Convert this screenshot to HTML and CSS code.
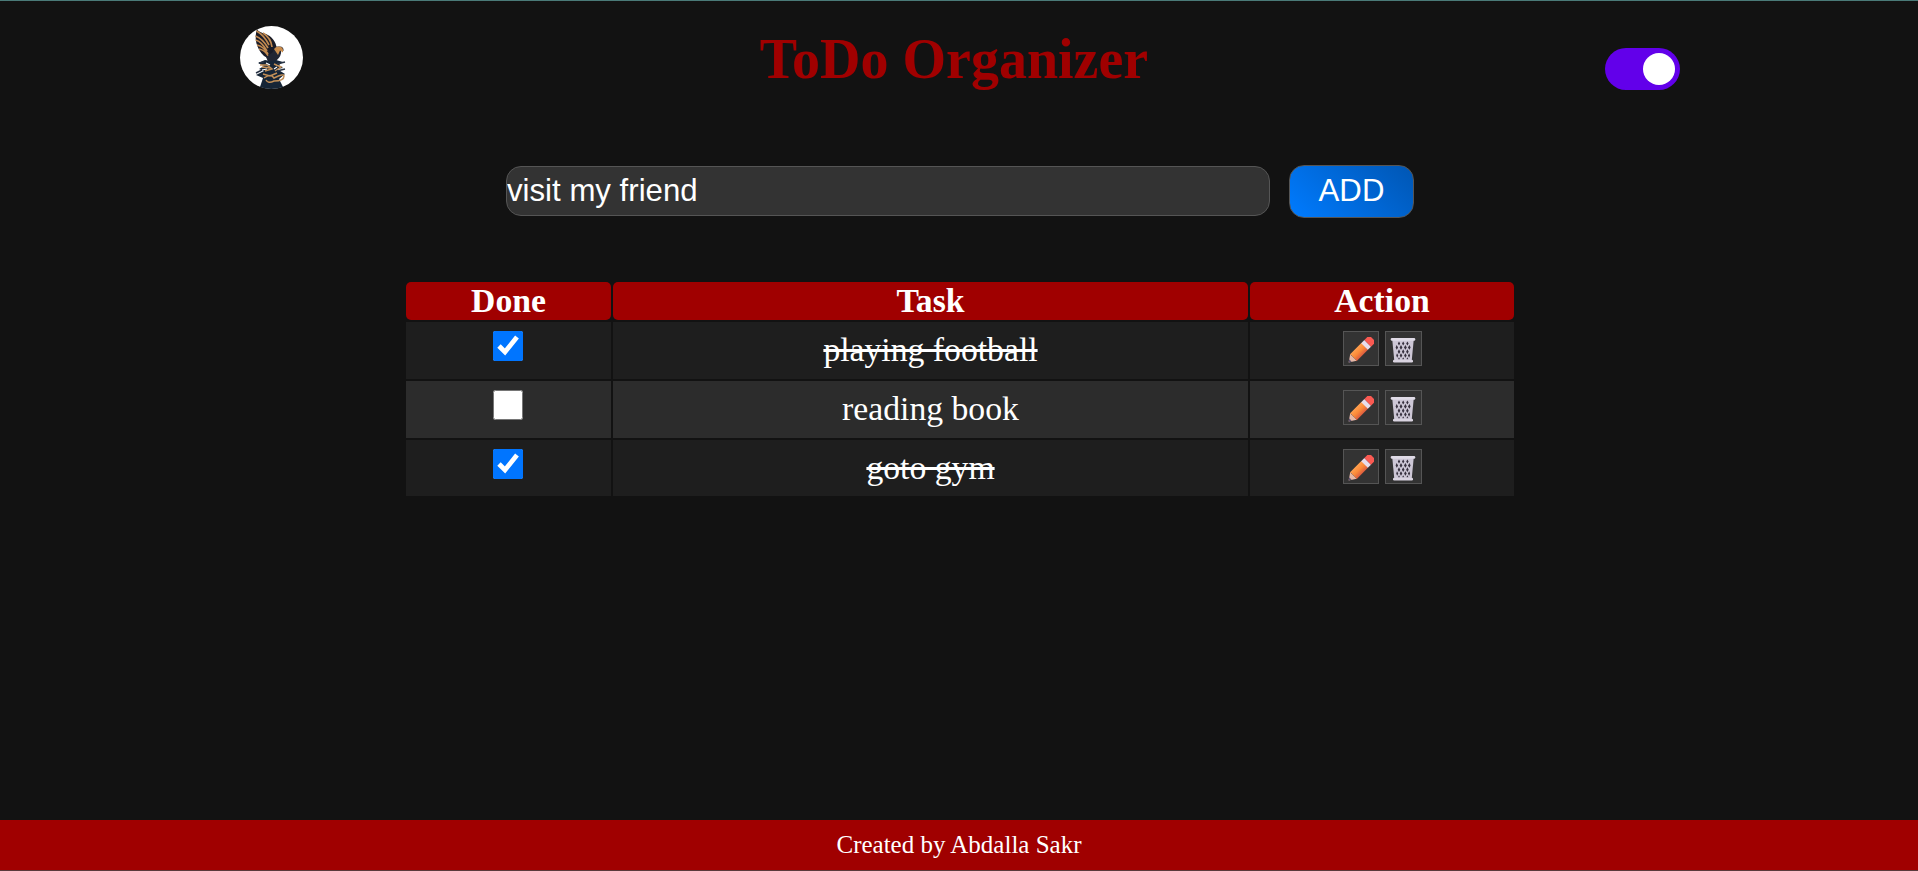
FILE: index.html
```
<!DOCTYPE html>
<html lang="en">
<head>
<meta charset="utf-8">
<title>ToDo Organizer</title>
<link rel="stylesheet" href="styles.css">
</head>
<body>
<svg width="0" height="0" class="defs">
  <defs>
    <linearGradient id="wood" x1="0" y1="0" x2="0" y2="1"><stop offset="0" stop-color="#ffa050"/><stop offset=".5" stop-color="#fb8a38"/><stop offset="1" stop-color="#dc5c40"/></linearGradient>
    <symbol id="pencil" viewBox="0 0 26 26">
      <g transform="translate(.6 25.400) rotate(-45)">
        <path d="M0 0 7-4.700V4.700Z" fill="#e6b8a6"/>
        <path d="M0 0 2.600-1.800V1.800Z" fill="#5d5270"/>
        <path d="M6.500-4.700H23V4.700H6.500Q8 2.500 6.800 1.500 8 0 6.800-1.500 8-2.500 6.500-4.700Z" fill="url(#wood)"/>
        <path d="M22.500-4.700h4.500v9.400h-4.500Z" fill="#e8deec"/>
        <path d="M27-4.700h4.200q2.600 0 2.600 2.600v4.200q0 2.600-2.600 2.600H27Z" fill="#fa5a52"/>
      </g>
    </symbol>
    <symbol id="bin" viewBox="0 0 26 26">
      <path d="M2.300 3h21.400l-2 21H4.300Z" fill="#cdc7d6"/>
      <g fill="#37313f">
        <path d="m9 4.500 1.200 2L9 8.500l-1.200-2ZM13.200 4.500l1.200 2-1.200 2-1.200-2ZM17.400 4.500l1.200 2-1.200 2-1.200-2ZM6.600 8l1.500 2.400-1.300 2.400-1.200-2.400ZM11 8l1.400 2.400L11 12.800l-1.400-2.400ZM15.400 8l1.400 2.400-1.400 2.400-1.400-2.400ZM19.600 8l1 2.400-1.200 2.400-1.500-2.400ZM9 12.300l1.300 2.400L9 17.100l-1.300-2.400ZM13.200 12.300l1.300 2.400-1.300 2.400-1.300-2.400ZM17.400 12.300l1.300 2.400-1.300 2.400-1.300-2.400ZM7 16.300l1.300 2.200L7.200 20.700l-1-2.200ZM11 16.300l1.300 2.200-1.300 2.200-1.300-2.200ZM15.400 16.300l1.300 2.200-1.300 2.200-1.300-2.200ZM19.200 16.300l.9 2.200-1 2.200-1.200-2.200ZM9 20.300l1 2H8ZM13.200 20.300l1 2h-2ZM17.400 20.300l1 2h-2Z"/>
      </g>
      <rect x=".7" y="1" width="24.600" height="2.800" rx="1.300" fill="#e0dbe7"/>
      <rect x="3" y="22.700" width="20" height="2.800" rx="1.300" fill="#dad4e1"/>
    </symbol>
  </defs>
</svg>
<header class="header">
  <svg class="logo" viewBox="0 0 63 63" role="img" aria-label="Eagle logo">
    <circle cx="31.500" cy="31.500" r="31.500" fill="#fff"/>
    <path d="M17 3C14 12 16 22 24 30L33 35 37 23C36 15 31 10 26 8Q18 6 17 3Z" fill="#1a1b26"/>
    <g fill="none" stroke="#c28a50" stroke-width="1.700">
      <path d="M16.500 5Q24 9 29 19M15.500 10Q23 13 28 22M15.700 14Q22 16 27 25M17 19Q23 20 28 28M19 23Q25 24 29 31M23 7Q31 12 32 21"/>
    </g>
    <path d="M33 26Q34 20 39 20.500 44 20 43.500 25L41 24Q42 30 36 35L29 38 26 31Z" fill="#222532"/>
    <path d="M34 23Q37 19.500 41 21 43.500 22 43 26.500L40 24.500 38 29Z" fill="#c98c4c"/>
    <path d="M18 37 25 34 30 35 36 34 43 36 39 39 43 42 37 43 45 48 39 53 43 61Q31 65 20 61L23 52 16 49 24 45 19 43 24 40Z" fill="#162536"/>
    <path d="m20 39 7 0 5 4-7 2m9-7 7 3-6 4m-12 3 7 2 7-3M24 52q7-5 10 0 10-5 10-2 0 5-10 5-6 3-8-1m-4-13 8 1" fill="none" stroke="#c39058" stroke-width="1.500"/>
    <path d="m26 37 4 2m-8 5 5-1m7 0 3-2" stroke="#fff" stroke-width="1.200"/>
    <path d="m16 47 6-3m15-6 8-2m-8 9 8-2M24 36l-5 1" stroke="#283344" stroke-width="1.500"/>
  </svg>
  <h1 class="title">ToDo Organizer</h1>
  <label class="toggle"><span class="knob"></span></label>
</header>
<main class="main">
  <form class="entry">
    <input class="field" type="text" value="visit my friend">
    <button class="add" type="button">ADD</button>
  </form>
  <table class="tasks">
    <colgroup><col class="col-done"><col class="col-task"><col class="col-action"></colgroup>
    <thead><tr><th>Done</th><th>Task</th><th>Action</th></tr></thead>
    <tbody>
      <tr>
        <td><input class="check" type="checkbox" checked></td>
        <td class="done">playing football</td>
        <td><div class="actions"><button class="icon edit" type="button"><svg><use href="#pencil"/></svg></button><button class="icon remove" type="button"><svg><use href="#bin"/></svg></button></div></td>
      </tr>
      <tr>
        <td><input class="check" type="checkbox"></td>
        <td>reading book</td>
        <td><div class="actions"><button class="icon edit" type="button"><svg><use href="#pencil"/></svg></button><button class="icon remove" type="button"><svg><use href="#bin"/></svg></button></div></td>
      </tr>
      <tr>
        <td><input class="check" type="checkbox" checked></td>
        <td class="done">goto gym</td>
        <td><div class="actions"><button class="icon edit" type="button"><svg><use href="#pencil"/></svg></button><button class="icon remove" type="button"><svg><use href="#bin"/></svg></button></div></td>
      </tr>
    </tbody>
  </table>
</main>
<footer class="footer">Created by Abdalla Sakr</footer>
</body>
</html>
```
FILE: styles.css
```
* { box-sizing: border-box; }
body {
  margin: 0;
  height: 871px;
  display: flex;
  flex-direction: column;
  overflow: hidden;
  background: #121212;
  border-top: 1px solid #4a7a78;
  border-bottom: 1px solid #5a3a3c;
  color: #fff;
  font-family: "Liberation Serif", "Times New Roman", serif;
}
.defs { display: block; flex: none; height: 0; }
.header {
  display: flex;
  justify-content: space-between;
  align-items: flex-start;
  height: 164px;
  padding: 25px 238px 0 240px;
}
.logo { width: 63px; height: 63px; }
.title {
  margin: 1px 0 0;
  font-size: 56px;
  line-height: 64px;
  color: #a00000;
}
.toggle {
  display: flex;
  justify-content: flex-end;
  align-items: center;
  width: 75px;
  height: 42px;
  margin-top: 22px;
  padding: 0 5px;
  border-radius: 21px;
  background: #6200ea;
}
.knob { width: 32px; height: 32px; border-radius: 50%; background: #fff; }
.main { flex: 1; }
.entry {
  display: flex;
  align-items: flex-start;
  justify-content: center;
  gap: 19px;
  height: 53px;
  padding-left: 2px;
}
.field, .add {
  border: 1px solid #555;
  border-radius: 15px;
  color: #fff;
  font: 31.2px "Liberation Sans", Arial, sans-serif;
}
.field { width: 764px; height: 50px; margin-top: 1px; padding: 0; background: #333; }
.add {
  width: 125px;
  height: 53px;
  padding: 0 0 1px;
  background: linear-gradient(45deg, #007bff, #0056b3);
}
.tasks {
  width: 1112px;
  margin: 62px 0 0 404px;
  table-layout: fixed;
  border-spacing: 2px;
  font-size: 33.7px;
  text-align: center;
}
.col-done { width: 205px; }
.col-task { width: 635px; }
.col-action { width: 264px; }
th { height: 38px; padding: 0; border-radius: 5px; background: #a00000; line-height: 38px; }
td { height: 57px; padding: 0 0 2px; background: #1e1e1e; line-height: 38px; }
tr:nth-child(even) td { background: #2c2c2c; }
tr:last-child td { height: 56px; padding-bottom: 1px; }
.done { text-decoration: line-through; }
.check { display: block; width: 30px; height: 30px; margin: -8px auto 0 87px; accent-color: #0075ff; }
.actions { display: flex; justify-content: center; gap: 6px; margin-top: -3px; }
.icon {
  display: flex;
  align-items: center;
  justify-content: center;
  height: 35px;
  padding: 0;
  border: 1px solid #555;
  background: #333;
}
.icon svg { width: 26px; height: 26px; margin-top: 4px; }
.edit { width: 36px; }
.remove { width: 37px; }
.footer {
  height: 50px;
  background: #a00000;
  text-align: center;
  font-size: 25px;
  line-height: 50px;
}
```
